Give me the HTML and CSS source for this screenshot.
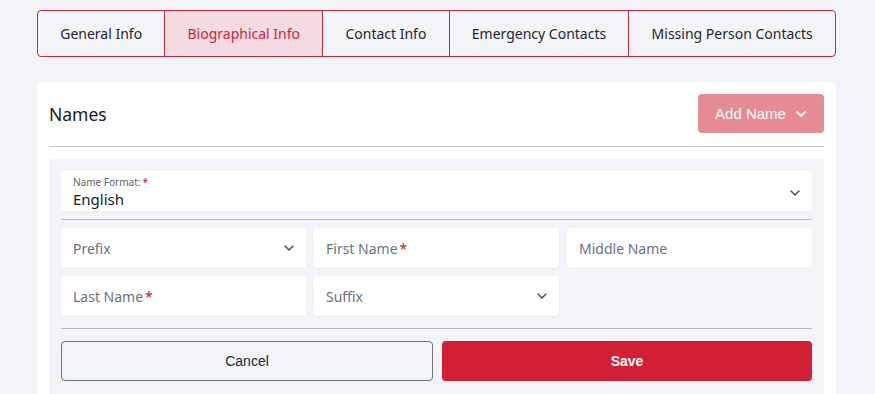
FILE: index.html
```html
<!DOCTYPE html>
<html lang="en">
<head>
    <meta charset="UTF-8">
    <title>Biographical Info</title>
    <link rel="stylesheet" href="styles.css">
</head>
<body>

    <!-- Tabs -->
    <div class="tabs">
        <a class="tab" href="#">General Info</a>
        <a class="tab active" href="#">Biographical Info</a>
        <a class="tab" href="#">Contact Info</a>
        <a class="tab" href="#">Emergency Contacts</a>
        <a class="tab" href="#">Missing Person Contacts</a>
    </div>

    <div class="card">
        <div class="card-header">
            <h2>Names</h2>
            <button class="add-btn">Add Name
                <svg width="12" height="12" viewBox="0 0 12 12"><path d="M2 4l4 4 4-4" fill="none" stroke="#fff" stroke-width="1.8" stroke-linecap="round" stroke-linejoin="round"/></svg>
            </button>
        </div>

        <div class="panel">
            <div class="field format">
                <div>
                    <div class="small-label">Name Format:<span class="req">*</span></div>
                    <div class="value">English</div>
                </div>
                <svg class="chev" width="12" height="12" viewBox="0 0 12 12"><path d="M2 4l4 4 4-4" fill="none" stroke="#4a4f5a" stroke-width="1.5" stroke-linecap="round" stroke-linejoin="round"/></svg>
            </div>

            <hr class="divider">

            <div class="grid">
                <div class="field">
                    <span class="ph">Prefix</span>
                    <svg class="chev" width="12" height="12" viewBox="0 0 12 12"><path d="M2 4l4 4 4-4" fill="none" stroke="#4a4f5a" stroke-width="1.5" stroke-linecap="round" stroke-linejoin="round"/></svg>
                </div>
                <div class="field"><span class="ph">First Name<span class="req">*</span></span></div>
                <div class="field"><span class="ph">Middle Name</span></div>
                <div class="field"><span class="ph">Last Name<span class="req">*</span></span></div>
                <div class="field">
                    <span class="ph">Suffix</span>
                    <svg class="chev" width="12" height="12" viewBox="0 0 12 12"><path d="M2 4l4 4 4-4" fill="none" stroke="#4a4f5a" stroke-width="1.5" stroke-linecap="round" stroke-linejoin="round"/></svg>
                </div>
            </div>

            <hr class="divider wide">

            <div class="actions">
                <button class="cancel-btn">Cancel</button>
                <button class="save-btn">Save</button>
            </div>
        </div>
    </div>

</body>
</html>
```

FILE: styles.css
```css
body {
    font-family: "Noto Sans", sans-serif;
    margin: 0;
    padding: 10px 0 0 37px;
    background: #f3f4f8;
    color: #1f2430;
    overflow: hidden;
}
.tabs {
    display: flex;
    width: 799px;
    height: 47px;
    box-sizing: border-box;
    border: 1px solid #c52a3a;
    border-radius: 4px;
    overflow: hidden;
}
.tab {
    flex: 1 1 auto;
    display: flex;
    align-items: center;
    justify-content: center;
    padding: 0 18px;
    font-size: 14px;
    color: #1f2430;
    text-decoration: none;
    border-left: 1px solid #c52a3a;
}
.tab:first-child {
    border-left: none;
}
.tab.active {
    background: #f3dbe1;
    color: #c8283a;
}
.card {
    width: 799px;
    margin-top: 25px;
    box-sizing: border-box;
    background: #fff;
    border-radius: 4px;
    padding: 12px 12px 0;
    height: 320px;
}
.card-header {
    display: flex;
    justify-content: space-between;
    align-items: center;
    padding-bottom: 13px;
    border-bottom: 1px solid #c3c5cc;
}
.card-header h2 {
    margin: 0;
    font-size: 17.5px;
    font-weight: normal;
    color: #161a22;
}
.add-btn {
    display: flex;
    align-items: center;
    gap: 9px;
    width: 126px;
    height: 39px;
    justify-content: center;
    background: #e68b96;
    color: #fff;
    border: none;
    border-radius: 4px;
    font-family: "Liberation Sans", Arial, sans-serif;
    font-size: 15px;
}
.panel {
    margin-top: 12px;
    background: #f3f4f8;
    padding: 12px;
    height: 240px;
}
.field {
    display: flex;
    align-items: center;
    justify-content: space-between;
    height: 40px;
    box-sizing: border-box;
    background: #fff;
    border-radius: 4px;
    padding: 0 11px 0 12px;
    box-shadow: 0 1px 2px rgba(0,0,0,0.04);
}
.format {
    padding-top: 3px;
}
.small-label {
    font-size: 10px;
    color: #5d6270;
    line-height: 12px;
    margin-bottom: 2px;
}
.value {
    font-size: 15px;
    line-height: 19px;
    color: #15181f;
}
.ph {
    font-size: 14px;
    color: #6b7080;
}
.req {
    color: #c8102e;
    margin-left: 2px;
}
.divider {
    border: none;
    border-top: 1px solid #b9bcc4;
    margin: 8px 0;
}
.divider.wide {
    margin: 12px 0;
}
.grid {
    display: grid;
    grid-template-columns: repeat(3, 1fr);
    gap: 8px;
}
.actions {
    display: flex;
    gap: 9px;
}
.actions button {
    flex: 1;
    height: 40px;
    border-radius: 4px;
    font-family: "Liberation Sans", Arial, sans-serif;
    font-size: 14px;
}
.cancel-btn {
    background: transparent;
    border: 1px solid #6b7385;
    color: #1f2430;
}
.save-btn {
    background: #d21f35;
    border: none;
    color: #fff;
    font-weight: bold;
}
```
